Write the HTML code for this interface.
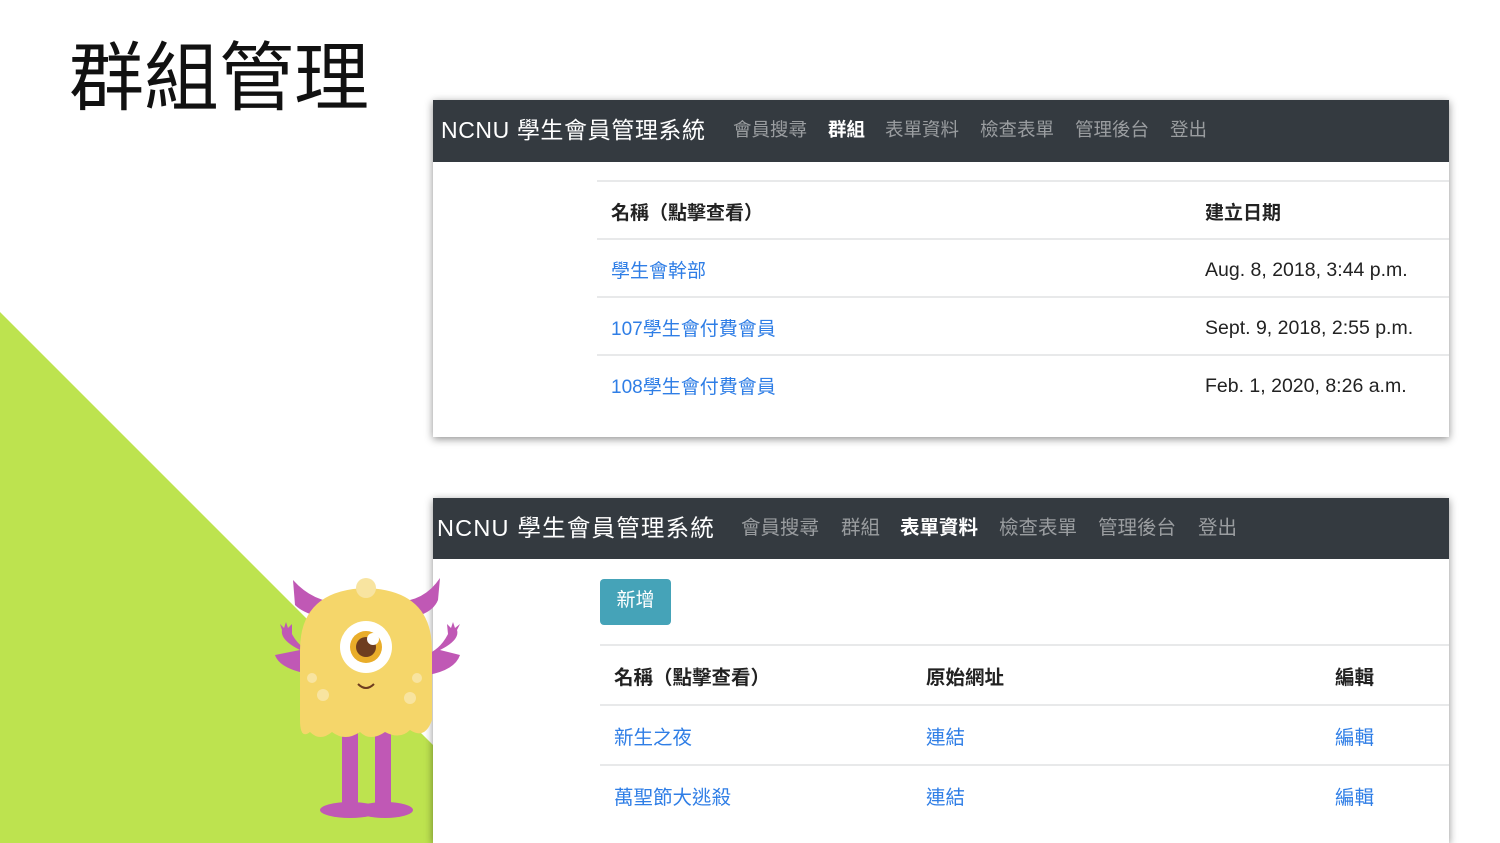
<!DOCTYPE html>
<html><head><meta charset="utf-8"><style>
*{margin:0;padding:0;box-sizing:border-box}
html,body{width:1500px;height:843px;overflow:hidden}
body{background:#fff;position:relative;font-family:"Liberation Sans","Noto Sans CJK TC",sans-serif}
.abs{position:absolute}
.shot{position:absolute;left:433px;width:1016px;background:#fff;box-shadow:0 2px 8px rgba(0,0,0,.45)}
.nav{height:62px;background:#343a40;color:#fff;position:relative}
.nav span{position:absolute;top:0;line-height:60px;white-space:nowrap}
.g{color:#9a9da0;font-size:18.5px}
.w{color:#fff;font-size:18.5px;font-weight:bold}
.t{position:absolute;white-space:nowrap;font-size:19px}
.h{font-weight:bold;color:#222}
.l{color:#2f7ee6}
.d{color:#222;font-size:19.5px}
.hr{position:absolute;height:2px;background:#e8e9ea}
</style></head><body>
<div class="abs" style="left:69px;top:26px;font-size:75px;color:#111;font-family:'Noto Sans CJK TC',sans-serif;line-height:92px">群組管理</div>
<svg class="abs" style="left:0;top:0" width="1500" height="843"><polygon points="0,312 531,843 0,843" fill="#bde34f"/></svg>

<div class="shot" style="top:100px;height:337px">
 <div class="nav">
  <span style="left:8px;font-size:23px;letter-spacing:0.6px">NCNU 學生會員管理系統</span>
  <span class="g" style="left:300px">會員搜尋</span>
  <span class="w" style="left:395px">群組</span>
  <span class="g" style="left:452px">表單資料</span>
  <span class="g" style="left:547px">檢查表單</span>
  <span class="g" style="left:642px">管理後台</span>
  <span class="g" style="left:737px">登出</span>
 </div>
 <div class="hr" style="left:164px;right:0;top:80px"></div>
 <div class="t h" style="left:178px;top:98px">名稱（點擊查看）</div>
 <div class="t h" style="left:772px;top:98px">建立日期</div>
 <div class="hr" style="left:164px;right:0;top:138px"></div>
 <div class="t l" style="left:178px;top:156px">學生會幹部</div>
 <div class="t d" style="left:772px;top:159px">Aug. 8, 2018, 3:44 p.m.</div>
 <div class="hr" style="left:164px;right:0;top:196px"></div>
 <div class="t l" style="left:178px;top:214px">107學生會付費會員</div>
 <div class="t d" style="left:772px;top:217px">Sept. 9, 2018, 2:55 p.m.</div>
 <div class="hr" style="left:164px;right:0;top:254px"></div>
 <div class="t l" style="left:178px;top:272px">108學生會付費會員</div>
 <div class="t d" style="left:772px;top:275px">Feb. 1, 2020, 8:26 a.m.</div>
</div>

<div class="shot" style="top:498px;height:345px">
 <div class="nav" style="height:61px">
  <span style="left:4px;font-size:23.5px;letter-spacing:1.2px">NCNU 學生會員管理系統</span>
  <span class="g" style="left:308px;font-size:19.5px">會員搜尋</span>
  <span class="g" style="left:408px;font-size:19.5px">群組</span>
  <span class="w" style="left:467px;font-size:19.5px">表單資料</span>
  <span class="g" style="left:566px;font-size:19.5px">檢查表單</span>
  <span class="g" style="left:665px;font-size:19.5px">管理後台</span>
  <span class="g" style="left:765px;font-size:19.5px">登出</span>
 </div>
 <div class="abs" style="left:167px;top:81px;width:71px;height:46px;background:#45a3b8;border-radius:4px;color:#fff;font-size:19px;line-height:44px;text-align:center">新增</div>
 <div class="hr" style="left:167px;right:0;top:146px"></div>
 <div class="t h" style="left:181px;top:163px;font-size:19.5px">名稱（點擊查看）</div>
 <div class="t h" style="left:493px;top:163px;font-size:19.5px">原始網址</div>
 <div class="t h" style="left:902px;top:163px;font-size:19.5px">編輯</div>
 <div class="hr" style="left:167px;right:0;top:206px"></div>
 <div class="t l" style="left:181px;top:223px;font-size:19.5px">新生之夜</div>
 <div class="t l" style="left:493px;top:223px;font-size:19.5px">連結</div>
 <div class="t l" style="left:902px;top:223px;font-size:19.5px">編輯</div>
 <div class="hr" style="left:167px;right:0;top:266px"></div>
 <div class="t l" style="left:181px;top:283px;font-size:19.5px">萬聖節大逃殺</div>
 <div class="t l" style="left:493px;top:283px;font-size:19.5px">連結</div>
 <div class="t l" style="left:902px;top:283px;font-size:19.5px">編輯</div>
</div>

<svg class="abs" style="left:260px;top:560px" width="220" height="283" viewBox="0 0 220 283">
 <path d="M33 20 Q60 50 100 40 L95 60 Q50 60 35 45 Z" fill="#c058b5"/>
 <path d="M180 18 Q160 48 120 40 L125 60 Q170 60 178 40 Z" fill="#c058b5"/>
 <path d="M40 90 Q20 80 22 70 L20 64 L24 68 L26 62 L28 68 L32 64 L32 74 Q40 90 60 95 L55 115 Q20 110 15 95 Z" fill="#c058b5"/>
 <path d="M180 90 Q200 80 197 70 L200 64 L195 68 L193 62 L191 68 L187 64 L188 74 Q180 90 165 95 L168 115 Q195 110 200 95 Z" fill="#c058b5"/>
 <rect x="82" y="165" width="16" height="80" fill="#c058b5"/>
 <rect x="115" y="165" width="16" height="80" fill="#c058b5"/>
 <ellipse cx="90" cy="250" rx="30" ry="8" fill="#c058b5"/>
 <ellipse cx="125" cy="250" rx="28" ry="8" fill="#c058b5"/>
 <path d="M40 160 L40 90 Q40 30 106 28 Q172 30 172 90 L172 160 Q165 180 150 170 Q140 180 125 172 Q110 182 100 172 Q85 182 72 172 Q60 182 50 172 Q40 180 40 160 Z" fill="#f5d66a"/>
 <circle cx="106" cy="28" r="10" fill="#f8e4a0"/>
 <circle cx="106" cy="87" r="26" fill="#fff"/>
 <circle cx="106" cy="87" r="16" fill="#e9ad2a"/>
 <circle cx="106" cy="87" r="10" fill="#6e3d1f"/>
 <circle cx="113" cy="79" r="6" fill="#fff"/>
 <path d="M98 124 Q106 132 114 124" stroke="#6e3d1f" stroke-width="2" fill="none"/>
 <circle cx="52" cy="118" r="5" fill="#f8e4a0"/><circle cx="63" cy="135" r="6" fill="#f8e4a0"/><circle cx="157" cy="118" r="5" fill="#f8e4a0"/><circle cx="150" cy="138" r="6" fill="#f8e4a0"/>
</svg>
</body></html>
